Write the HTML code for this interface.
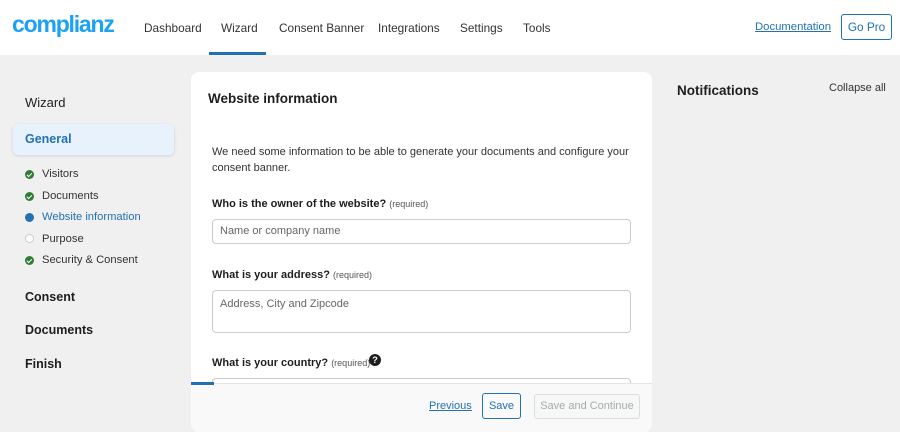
<!DOCTYPE html>
<html><head><style>
*{box-sizing:border-box;margin:0;padding:0}
body{width:900px;height:424px;overflow:hidden;background:#f0f0f1;font-family:"Liberation Sans",sans-serif;color:#1e1e1e;position:relative}
.hdr{position:absolute;left:0;top:0;width:900px;height:55px;background:#fff}
.logo{position:absolute;left:12px;top:11px;font-size:23px;font-weight:bold;color:#1da1f2;letter-spacing:-1.2px}
.nav{position:absolute;top:21px;font-size:11.8px;color:#333}
.ul{position:absolute;left:209px;top:52px;width:57px;height:3px;background:#2271b1}
.doc{position:absolute;left:755px;top:21px;font-size:11.3px;color:#2271b1;text-decoration:underline}
.gopro{position:absolute;left:841px;top:14px;width:51px;height:26px;border:1px solid #2271b1;border-radius:3px;font-size:11.8px;color:#2271b1;text-align:center;line-height:24px}
.side{position:absolute;left:25px;font-size:12px}
.gen{position:absolute;left:13px;top:124px;width:161px;height:31px;background:#e8f2fc;border-radius:5px;box-shadow:0 1px 3px rgba(0,0,0,.12);font-weight:bold;color:#2271b1;font-size:12.5px;padding:8px 12px}
.it{position:absolute;left:42px;font-size:11.2px;color:#333}
.dot{position:absolute;left:25px;width:9px;height:9px;border-radius:50%;background:#2e7d32}
.dot.g::after{content:"";position:absolute;left:2.5px;top:1.5px;width:2px;height:3.5px;border:solid #fff;border-width:0 1.3px 1.3px 0;transform:rotate(45deg)}
.bold{position:absolute;left:25px;font-size:12.5px;font-weight:bold}
.card{position:absolute;left:191px;top:72px;width:461px;height:360px;background:#fff;border-radius:8px;overflow:hidden}
.foot{position:absolute;left:0;top:311px;width:461px;height:50px;background:#f9f9f9;border-top:1px solid #e5e5e5}
.lbl{position:absolute;left:21px;font-size:11px;font-weight:bold}
.lbl span{font-weight:normal;font-size:9px;color:#555}
.inp{position:absolute;left:21px;width:419px;border:1px solid #ccc;border-radius:4px;font-size:11px;color:#666;padding:0 7px}
</style></head><body>
<div class="hdr">
<div class="logo">complianz</div>
<div class="nav" style="left:144px">Dashboard</div>
<div class="nav" style="left:221px">Wizard</div>
<div class="nav" style="left:279px">Consent Banner</div>
<div class="nav" style="left:378px">Integrations</div>
<div class="nav" style="left:460px">Settings</div>
<div class="nav" style="left:523px">Tools</div>
<div class="ul"></div>
<div class="doc">Documentation</div>
<div class="gopro">Go Pro</div>
</div>
<div class="side" style="top:95px;font-size:13px">Wizard</div>
<div class="gen">General</div>
<div class="dot g" style="top:170px"></div><div class="it" style="top:168px">Visitors</div>
<div class="dot g" style="top:192px"></div><div class="it" style="top:190px">Documents</div>
<div class="dot" style="top:213px;background:#2271b1"></div><div class="it" style="top:211px;color:#2271b1">Website information</div>
<div class="dot" style="top:234px;background:#fff;border:1px solid #ccc"></div><div class="it" style="top:233px">Purpose</div>
<div class="dot g" style="top:256px"></div><div class="it" style="top:254px">Security &amp; Consent</div>
<div class="bold" style="top:290px">Consent</div>
<div class="bold" style="top:323px">Documents</div>
<div class="bold" style="top:357px">Finish</div>
<div class="card">
<div style="position:absolute;left:17px;top:19px;font-size:13.5px;font-weight:bold">Website information</div>
<div style="position:absolute;left:21px;top:72px;width:420px;font-size:11px;line-height:16px;color:#333">We need some information to be able to generate your documents and configure your consent banner.</div>
<div class="lbl" style="top:126px">Who is the owner of the website? <span>(required)</span></div>
<div class="inp" style="top:147px;height:25px;line-height:23px">Name or company name</div>
<div class="lbl" style="top:197px">What is your address? <span>(required)</span></div>
<div class="inp" style="top:218px;height:43px;padding-top:7px">Address, City and Zipcode</div>
<div class="lbl" style="top:285px">What is your country? <span>(required)</span></div>
<div style="position:absolute;left:178px;top:282px;width:12px;height:12px;border-radius:50%;background:#1e1e1e;color:#fff;font-size:9px;font-weight:bold;text-align:center;line-height:12px">?</div>
<div class="inp" style="top:306px;height:20px"></div>
<div class="foot">
<div style="position:absolute;left:0;top:-2px;width:23px;height:3px;background:#2271b1"></div>
<div style="position:absolute;left:238px;top:16px;font-size:11px;color:#2271b1;text-decoration:underline">Previous</div>
<div style="position:absolute;left:291px;top:9px;width:39px;height:26px;border:1px solid #2271b1;border-radius:3px;font-size:11px;color:#2271b1;text-align:center;line-height:24px">Save</div>
<div style="position:absolute;left:343px;top:10px;width:106px;height:25px;border:1px solid #ddd;border-radius:3px;font-size:11px;color:#a7aaad;text-align:center;line-height:23px;background:#f6f7f7">Save and Continue</div>
</div>
</div>
<div style="position:absolute;left:677px;top:83px;font-size:13.5px;font-weight:bold">Notifications</div>
<div style="position:absolute;left:829px;top:82px;font-size:11px;color:#333">Collapse all</div>
</body></html>
